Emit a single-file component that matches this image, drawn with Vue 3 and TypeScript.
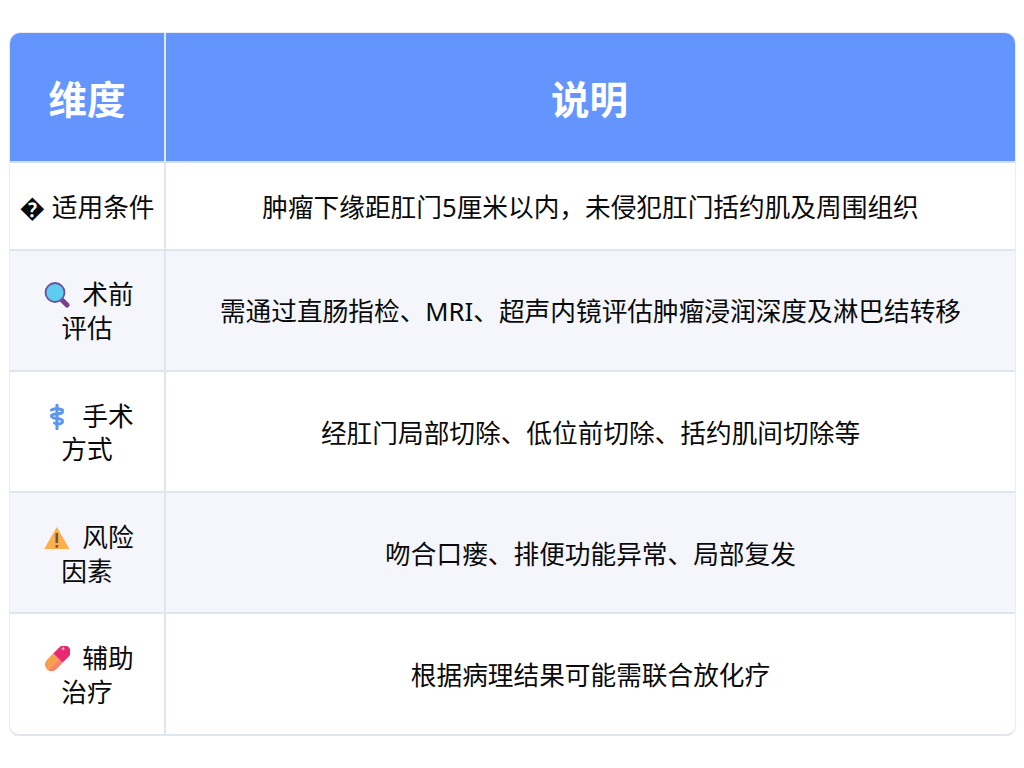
<script setup lang="ts">
const rows = [
  { icon: '', name: '适用条件', name2: '', text: '肿瘤下缘距肛门5厘米以内，未侵犯肛门括约肌及周围组织' },
  { icon: 'search', name: '术前', name2: '评估', text: '需通过直肠指检、MRI、超声内镜评估肿瘤浸润深度及淋巴结转移' },
  { icon: 'staff', name: '手术', name2: '方式', text: '经肛门局部切除、低位前切除、括约肌间切除等' },
  { icon: 'warn', name: '风险', name2: '因素', text: '吻合口瘘、排便功能异常、局部复发' },
  { icon: 'pill', name: '辅助', name2: '治疗', text: '根据病理结果可能需联合放化疗' },
]
</script>

<template>
  <div class="page">
    <table>
      <thead>
        <tr><th class="c1">维度</th><th class="c2">说明</th></tr>
      </thead>
      <tbody>
        <tr v-for="r in rows" :key="r.name">
          <td class="c1">
            <template v-if="!r.icon">&#xFFFD; </template>
            <svg v-else class="ico" viewBox="0 0 26 26" aria-hidden="true">
              <template v-if="r.icon === 'search'">
                <path d="M17.500 17.500l5.500 5.500" stroke="#7b3f8f" stroke-width="5" stroke-linecap="round" />
                <circle cx="11" cy="10.500" r="9.500" fill="#5ccdf0" stroke="#70509a" stroke-width="1.800" />
              </template>
              <template v-else-if="r.icon === 'staff'">
                <g fill="none" stroke="#5b96f0" stroke-width="3" stroke-linecap="round">
                  <path d="M13 1v24" />
                  <path d="M7.500 6c3-1.500 7-1.500 11 0" />
                  <path d="M18.500 8c-1 3.500-11 .5-11 4s11 1.500 11 5-5.500 3.500-8 2" />
                </g>
              </template>
              <template v-else-if="r.icon === 'warn'">
                <path d="M12.800 2L25.500 24H0.200z" fill="#ffae4c" />
                <rect x="11.500" y="8" width="2.600" height="10" fill="#5f5a55" />
                <rect x="11.500" y="20" width="2.600" height="2.600" fill="#5f5a55" />
              </template>
              <template v-else>
                <g transform="translate(.800 -.800) rotate(-45 13 13)">
                  <path d="M13 6.500h9a6.500 6.500 0 010 13h-9z" fill="#e8286f" />
                  <path d="M13 6.500H4a6.500 6.500 0 000 13h9z" fill="#f6a04d" />
                  <path d="M-2.200 15h15.200v4.500H4a6.500 6.500 0 01-6.200-4.500z" fill="#f98270" />
                  <circle cx="23.500" cy="10" r="1.400" fill="#f8a8c8" />
                </g>
              </template>
            </svg>
            {{ r.name }}<template v-if="r.name2"><br />{{ r.name2 }}</template>
          </td>
          <td>{{ r.text }}</td>
        </tr>
      </tbody>
    </table>
  </div>
</template>

<style>
html, body { background: #fff; }
</style>
<style scoped>
.page { padding: 33px 9px 0 10px; font-family: "Noto Sans", "Noto Sans CJK SC", sans-serif; }
table { width: 100%; border-collapse: separate; border-spacing: 0; table-layout: fixed; color: #0a0a0a; background: #fff; border-radius: 10px; box-shadow: 0 0 0 1px #e8ecf3; }
.c1 { width: 156px; box-sizing: border-box; }
th { background: #6495ff; color: #fff; font-size: 38.5px; font-weight: 700; padding: 40px 10px 36px; border-bottom: 2px solid #d3def2; line-height: 52px; }
th.c2 { padding-right: 12px; }
th:first-child { border-top-left-radius: 10px; border-right: 2px solid #e0e6ed; }
th:last-child { border-top-right-radius: 10px; }
td { font-size: 25.68px; text-align: center; padding: 27.8px 8px 24.1px; line-height: 33.7px; border-bottom: 2px solid #e0e6ed; }
td.c1 { border-right: 2px solid #e0e6ed; }
tbody tr:nth-child(even) td { background: #f4f6fb; }
tbody tr:last-child td:first-child { border-bottom-left-radius: 10px; }
tbody tr:last-child td:last-child { border-bottom-right-radius: 10px; }
.ico { width: 26px; height: 26px; vertical-align: -4px; margin: 0 5.3px 0 4px; }
</style>
